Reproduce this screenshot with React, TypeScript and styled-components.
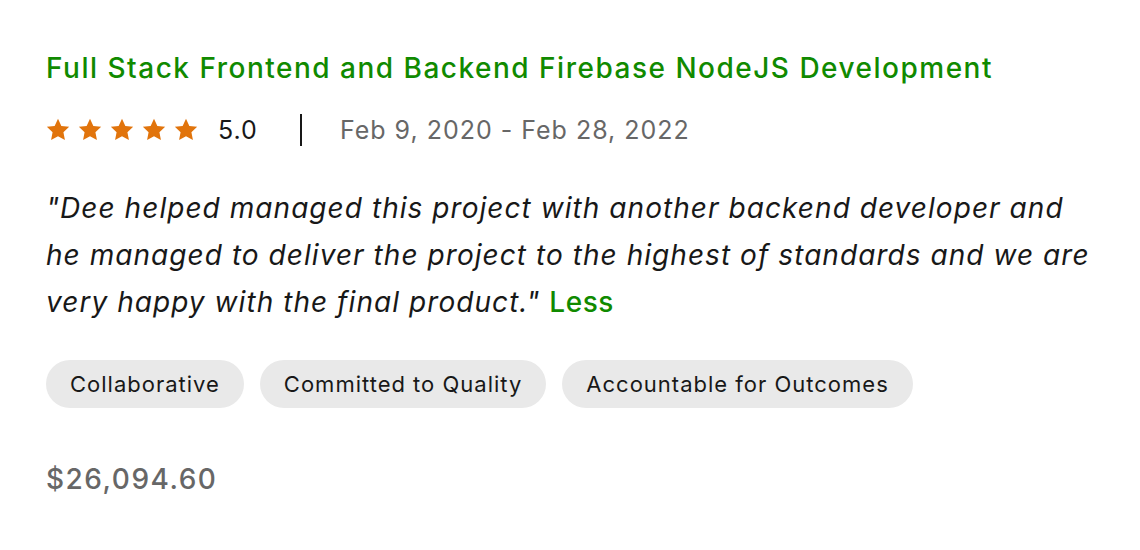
import styled, { createGlobalStyle } from "styled-components";

const Color = {
  Green: "#108a00",
  Ink: "#181818",
  Muted: "#676767",
  Star: "#e1740c",
  Tag: "#e9e9e9",
};

const GlobalStyle = createGlobalStyle`
  body {
    margin: 0;
    background: #ffffff;
    font-family: Inter, "Liberation Sans", Arial, sans-serif;
    -webkit-font-smoothing: antialiased;
  }
`;

const skills = [
  "Collaborative",
  "Committed to Quality",
  "Accountable for Outcomes",
];

function Star() {
  return (
    <StarIcon viewBox="0 0 24 24" aria-hidden="true">
      <path d="M12 1.6l3.1 6.6 7.2.9-5.3 5 1.4 7.1L12 17.7l-6.4 3.5 1.4-7.1-5.3-5 7.2-.9z" />
    </StarIcon>
  );
}

export default function App() {
  return (
    <>
      <GlobalStyle />
      <Card>
        <Title>Full Stack Frontend and Backend Firebase NodeJS Development</Title>
        <MetaRow>
          <Stars>
            {[0, 1, 2, 3, 4].map((i) => (
              <Star key={i} />
            ))}
          </Stars>
          <Score>5.0</Score>
          <Divider />
          <Dates>Feb 9, 2020 - Feb 28, 2022</Dates>
        </MetaRow>
        <Quote>
          "Dee helped managed this project with another backend developer and
          he managed to deliver the project to the highest of standards and we
          are very happy with the final product." <LessLink>Less</LessLink>
        </Quote>
        <Tags>
          {skills.map((skill) => (
            <Tag key={skill}>{skill}</Tag>
          ))}
        </Tags>
        <Price>$26,094.60</Price>
      </Card>
    </>
  );
}

const Card = styled.div`
  display: flex;
  flex-direction: column;
  align-items: flex-start;
  padding: 48px 46px 0;
  width: 1060px;
`;

const Title = styled.h2`
  margin: 0;
  font-size: 28px;
  font-weight: 500;
  line-height: 40px;
  letter-spacing: 1.5px;
  color: ${Color.Green};
`;

const MetaRow = styled.div`
  display: flex;
  align-items: center;
  margin-top: 25px;
  height: 34px;
`;

const Stars = styled.div`
  display: flex;
  gap: 6px;
  margin-left: -1px;
`;

const StarIcon = styled.svg`
  width: 26px;
  height: 26px;
  fill: ${Color.Star};
`;

const Score = styled.span`
  margin-left: 19px;
  font-size: 25px;
  letter-spacing: 1px;
  color: ${Color.Ink};
`;

const Divider = styled.span`
  width: 2px;
  height: 32px;
  margin: 0 38px 0 42px;
  background: ${Color.Ink};
`;

const Dates = styled.span`
  font-size: 25px;
  letter-spacing: 1px;
  color: ${Color.Muted};
`;

const Quote = styled.p`
  margin: 38px 0 0;
  font-size: 28px;
  font-style: italic;
  line-height: 47px;
  letter-spacing: 1.05px;
  color: ${Color.Ink};
`;

const LessLink = styled.a`
  font-style: normal;
  font-weight: 500;
  letter-spacing: 0.6px;
  color: ${Color.Green};
  cursor: pointer;
`;

const Tags = styled.div`
  display: flex;
  gap: 16px;
  margin-top: 34px;
`;

const Tag = styled.span`
  display: flex;
  align-items: center;
  height: 48px;
  padding: 0 24px;
  border-radius: 24px;
  background: ${Color.Tag};
  font-size: 22px;
  letter-spacing: 1px;
  color: ${Color.Ink};
`;

const Price = styled.div`
  margin-top: 54px;
  font-size: 28px;
  font-weight: 500;
  letter-spacing: 1.5px;
  color: ${Color.Muted};
`;
